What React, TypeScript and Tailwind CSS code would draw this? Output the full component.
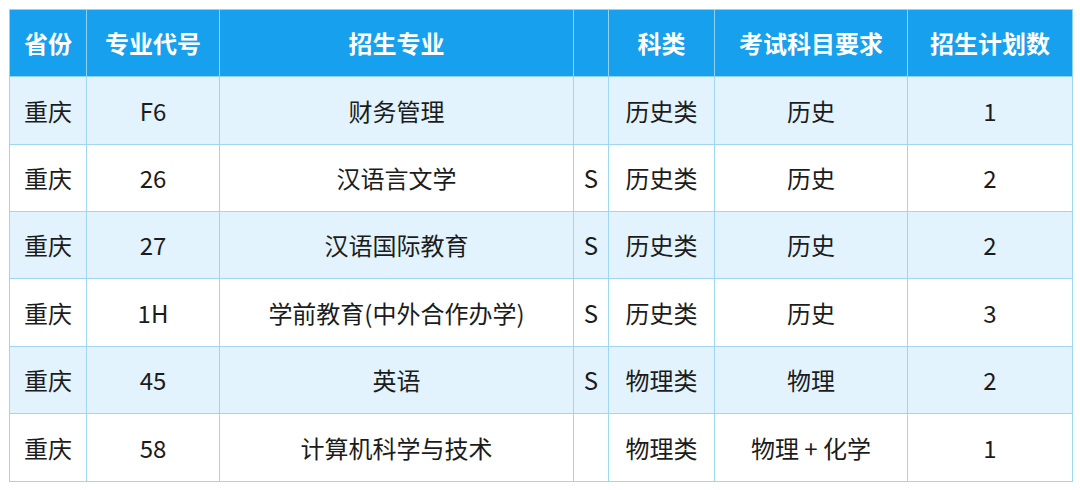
import React from "react";

const rows = [
  ["重庆", "F6", "财务管理", "", "历史类", "历史", "1"],
  ["重庆", "26", "汉语言文学", "S", "历史类", "历史", "2"],
  ["重庆", "27", "汉语国际教育", "S", "历史类", "历史", "2"],
  ["重庆", "1H", "学前教育(中外合作办学)", "S", "历史类", "历史", "3"],
  ["重庆", "45", "英语", "S", "物理类", "物理", "2"],
  ["重庆", "58", "计算机科学与技术", "", "物理类", "物理 + 化学", "1"],
];

const heights = ["h-[68px]", "h-[67px]", "h-[67px]", "h-[68px]", "h-[67px]", "h-[68px]"];

export default function App() {
  return (
    <div
      className="w-[1080px] h-[490px] bg-white pt-[9px] pl-[9px]"
      style={{ fontFamily: '"Noto Sans CJK SC", "Noto Sans", sans-serif' }}
    >
      <table className="table-fixed border-collapse w-[1063px] text-[24px] leading-none text-[#1c1c1c]">
        <colgroup>
          <col className="w-[77px]" />
          <col className="w-[133px]" />
          <col className="w-[354px]" />
          <col className="w-[35px]" />
          <col className="w-[106px]" />
          <col className="w-[193px]" />
          <col className="w-[165px]" />
        </colgroup>
        <thead>
          <tr className="h-[67px] bg-[#17a0ee] text-white font-bold">
            {["省份", "专业代号", "招生专业", "", "科类", "考试科目要求", "招生计划数"].map((h, i) => (
              <th key={i} className="border border-[#8fd3f5] text-center align-middle p-0 font-bold">
                {h}
              </th>
            ))}
          </tr>
        </thead>
        <tbody>
          {rows.map((r, ri) => (
            <tr key={ri} className={`${heights[ri]} ${ri % 2 === 0 ? "bg-[#e2f3fd]" : "bg-white"}`}>
              {r.map((c, ci) => (
                <td key={ci} className="border border-[#9fd6f2] text-center align-middle p-0">
                  {c}
                </td>
              ))}
            </tr>
          ))}
        </tbody>
      </table>
    </div>
  );
}
